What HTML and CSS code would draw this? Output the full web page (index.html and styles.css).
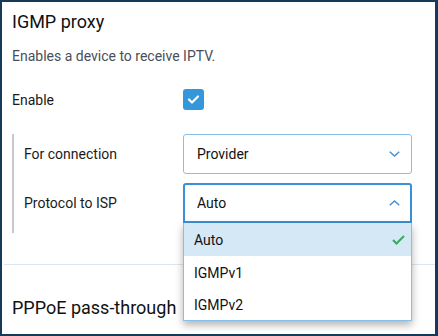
FILE: index.html
```html
<!DOCTYPE html>
<html lang="en">
<head>
  <meta charset="UTF-8">
  <meta name="viewport" content="width=device-width, initial-scale=1.0">
  <title>IGMP proxy</title>
  <link rel="stylesheet" href="styles.css">
</head>
<body>
  <div class="frame">
    <section class="block">
      <h2 class="title">IGMP proxy</h2>
      <p class="desc">Enables a device to receive IPTV.</p>

      <div class="row enable">
        <span class="label">Enable</span>
        <span class="checkbox">
          <svg width="21" height="21" viewBox="0 0 21 21"><path d="M6 10.5 L9 13.5 L15 7.5" fill="none" stroke="#fff" stroke-width="2.2" stroke-linecap="round" stroke-linejoin="round"/></svg>
        </span>
      </div>

      <div class="group">
        <div class="row">
          <span class="label">For connection</span>
          <div class="select">
            <span>Provider</span>
            <svg class="chevron" width="11" height="6" viewBox="0 0 11 6"><path d="M0.75 0.75 L5.5 5 L10.25 0.75" fill="none" stroke="#4a8fd4" stroke-width="1.5"/></svg>
          </div>
        </div>
        <div class="row">
          <span class="label">Protocol to ISP</span>
          <div class="select-wrap">
            <div class="select open">
              <span>Auto</span>
              <svg class="chevron" width="11" height="6" viewBox="0 0 11 6"><path d="M0.75 5.25 L5.5 1 L10.25 5.25" fill="none" stroke="#4a8fd4" stroke-width="1.5"/></svg>
            </div>
            <ul class="options">
              <li class="selected">Auto
                <svg width="13" height="10" viewBox="0 0 13 10"><path d="M1 5 L4.5 8.5 L12 1" fill="none" stroke="#3aa764" stroke-width="2"/></svg>
              </li>
              <li>IGMPv1</li>
              <li>IGMPv2</li>
            </ul>
          </div>
        </div>
      </div>
    </section>

    <hr class="sep">

    <section class="block">
      <h2 class="title next">PPPoE pass-through</h2>
    </section>
  </div>
</body>
</html>
```

FILE: styles.css
```css
* {
  margin: 0;
  padding: 0;
  box-sizing: border-box;
}

body {
  font-family: Roboto, "Liberation Sans", sans-serif;
  color: #1a1a1a;
  background: #fff;
}

.frame {
  height: 100vh;
  border: 2px solid #153b58;
  border-right-width: 3px;
  overflow: hidden;
}

.block {
  padding: 0 23px 0 10px;
}

.title {
  font-size: 18px;
  font-weight: 400;
  line-height: 24px;
  color: #111;
  margin-top: 8px;
}

.title.next {
  margin-top: 31px;
}

.desc {
  font-size: 14px;
  line-height: 20px;
  color: #474f59;
  margin-top: 12px;
}

.row {
  display: flex;
  align-items: center;
  font-size: 14px;
  line-height: 20px;
}

.enable {
  margin-top: 23px;
}

.enable .label {
  width: 171px;
}

.checkbox {
  width: 21px;
  height: 21px;
  border-radius: 3px;
  background: #3497db;
  display: flex;
}

.group {
  margin-top: 24px;
  border-left: 2px solid #c9c9cd;
  padding: 0 0 10px 10px;
  display: flex;
  flex-direction: column;
  gap: 9px;
}

.group .label {
  width: 159px;
}

.select-wrap {
  position: relative;
  width: 229px;
}

.select {
  width: 229px;
  height: 40px;
  border: 1px solid #86c0ea;
  border-radius: 3px;
  padding: 0 11px 0 13px;
  display: flex;
  align-items: center;
  justify-content: space-between;
  color: #111;
}

.select.open {
  border: 2px solid #3a90d6;
  border-radius: 3px 3px 0 0;
  padding-left: 12px;
  padding-right: 10px;
}

.options {
  position: absolute;
  top: 40px;
  left: 0;
  width: 229px;
  list-style: none;
  background: #fff;
  border: 1px solid #86c0ea;
  border-top: none;
  box-shadow: 0 4px 8px rgba(0, 0, 0, 0.3);
  z-index: 2;
}

.options li {
  height: 32px;
  padding: 0 6px 0 10px;
  display: flex;
  align-items: center;
  justify-content: space-between;
  font-size: 14px;
  color: #111;
}

.options li.selected {
  height: 33px;
  background: #d4e8f6;
}

.options li + li {
  padding-top: 1px;
}

.sep {
  border: none;
  border-top: 1px solid #dbe6ef;
  margin: 31px 0 0 2px;
}
```
